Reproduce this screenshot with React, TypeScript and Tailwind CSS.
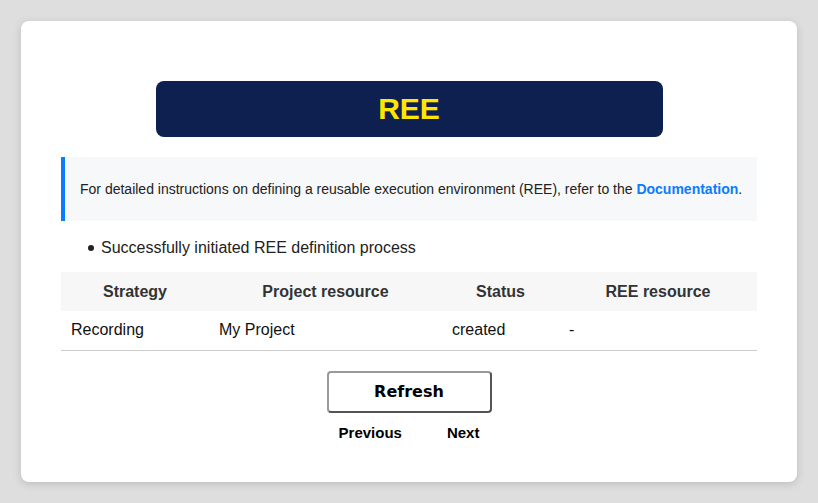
export default function App() {
  const cols = [
    { label: 'Strategy', w: 'w-[148px]' },
    { label: 'Project resource', w: 'w-[233px]' },
    { label: 'Status', w: 'w-[117px]' },
    { label: 'REE resource', w: 'w-[198px]' },
  ]
  const row = ['Recording', 'My Project', 'created', '-']

  return (
    <div className="min-h-[503px] bg-[#dedede] p-[21px] font-['Liberation_Sans',Arial,sans-serif]">
      <div className="rounded-lg bg-white px-10 pt-[60px] pb-10 shadow-[0_2px_8px_rgba(0,0,0,0.15)]">
        {/* Title banner */}
        <div className="mx-auto flex h-14 w-[507px] items-center justify-center rounded-lg bg-[#0e2050]">
          <h1 className="text-[30px] font-bold leading-none text-[#ffe600]">REE</h1>
        </div>

        {/* Info note */}
        <div className="mt-5 flex h-16 items-center border-l-4 border-[#0a7cff] bg-[#f7f8fa] pl-[15px]">
          <p className="text-sm text-[#222]">
            For detailed instructions on defining a reusable execution environment (REE), refer to the{' '}
            <a href="#" className="font-bold text-[#0a7cff]">Documentation</a>.
          </p>
        </div>

        <ul className="mt-[14px] pl-[27px] text-base leading-6 text-[#222]">
          <li className="flex h-[26px] items-center">
            <span className="mr-[7px] h-[6px] w-[6px] rounded-full bg-[#222]" />
            Successfully initiated REE definition process
          </li>
        </ul>

        {/* Status table */}
        <table className="mt-[11px] w-full border-collapse text-base">
          <thead>
            <tr className="h-[39px] bg-[#f7f7f7]">
              {cols.map((c) => (
                <th key={c.label} className={`${c.w} text-center font-bold text-[#333]`}>
                  {c.label}
                </th>
              ))}
            </tr>
          </thead>
          <tbody>
            <tr className="h-[39px] border-b border-[#cccccc]">
              {row.map((v, i) => (
                <td key={i} className="px-[10px] text-left text-[#111]">
                  {v}
                </td>
              ))}
            </tr>
          </tbody>
        </table>

        {/* Actions */}
        <div className="mt-[20px] flex flex-col items-center">
          <button className="h-[42px] w-[165px] rounded-[4px] border-2 border-t-[#999] border-l-[#999] border-r-[#555] border-b-[#555] bg-white font-['DejaVu_Sans',sans-serif] text-base font-bold text-black">
            Refresh
          </button>
          <div className="mt-[11px] flex gap-[45px] text-[15px] font-bold leading-[18px] text-black">
            <button>Previous</button>
            <button>Next</button>
          </div>
        </div>
      </div>
    </div>
  )
}
